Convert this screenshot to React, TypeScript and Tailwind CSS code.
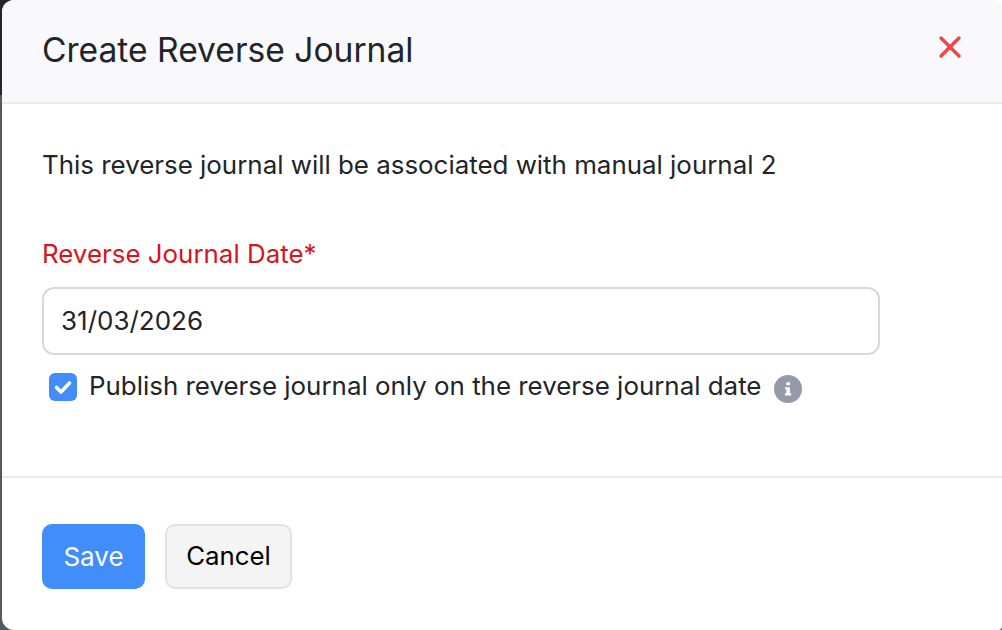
import { X } from "lucide-react";

const App = () => {
  return (
    <div className="h-[630px] w-[1002px] overflow-hidden bg-[linear-gradient(#23262e_0,#23262e_95px,#55585d_95px)] pl-[2px] font-['Inter',sans-serif] text-[#212529]">
      <div className="flex h-full flex-col overflow-hidden rounded-l-[12px] rounded-br-[4px] bg-white">
        {/* Header */}
        <div className="flex h-[104px] shrink-0 items-center justify-between rounded-tr-[8px] border-b-2 border-[#ebebef] bg-[#f9f9fb] pb-[2px] pl-[40px] pr-[34px]">
          <h1 className="text-[33.6px] font-normal leading-none">Create Reverse Journal</h1>
          <X className="mb-[6px] text-[#e9484d]" size={36} strokeWidth={2.3} />
        </div>

        {/* Body */}
        <div className="flex h-[374px] shrink-0 flex-col border-b-2 border-[#ebebef] pl-[40px] pt-[46px]">
          <p className="text-[25.9px] leading-[30px]">This reverse journal will be associated with manual journal 2</p>
          <label className="mt-[59px] text-[25.9px] leading-[30px] text-[#d6141d]">Reverse Journal Date*</label>
          <input
            readOnly
            value="31/03/2026"
            className="mt-[18px] h-[68px] w-[838px] rounded-[12px] border-2 border-[#d7d6e3] bg-white px-[17px] pb-[2px] text-[26px] text-[#212529] outline-none"
          />
          <div className="mt-[16px] flex items-center pl-[7px]">
            <span className="flex h-[28px] w-[28px] items-center justify-center rounded-[6px] bg-[#408dfb]">
              <svg width="22" height="22" viewBox="0 0 22 22" fill="none">
                <path d="M4.5 11.5 L9 16 L17.5 7" stroke="white" strokeWidth="3.6" strokeLinecap="round" strokeLinejoin="round" />
              </svg>
            </span>
            <span className="mb-[2px] ml-[12px] text-[25.9px] leading-[30px]">Publish reverse journal only on the reverse journal date</span>
            <span className="ml-[13px] mt-[3px] flex h-[28px] w-[28px] items-center justify-center rounded-full bg-[#969aa8]">
              <svg width="12" height="16" viewBox="0 0 14 18" fill="white">
                <rect x="5" y="1" width="4.4" height="3.6" rx="0.6" />
                <path d="M3.6 7h5.6v7h1.6v2.6H3.4V14h1.8V9.4H3.6z" />
              </svg>
            </span>
          </div>
        </div>

        {/* Footer */}
        <div className="flex gap-[20px] pl-[40px] pt-[46px]">
          <button className="h-[65px] w-[103px] rounded-[10px] bg-[#408dfb] text-[26px] text-white">Save</button>
          <button className="h-[65px] w-[127px] rounded-[10px] border-2 border-[#e2e2e2] bg-[#f4f4f4] text-[25.8px] text-black">Cancel</button>
        </div>
      </div>
    </div>
  );
};

export default App;
